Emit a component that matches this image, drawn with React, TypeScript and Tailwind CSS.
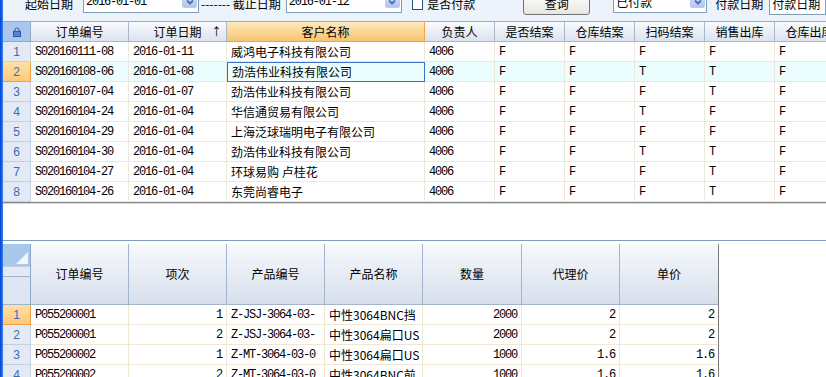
import React from 'react';

const mono = "font-['Liberation_Mono','Noto_Sans_CJK_SC',monospace] text-[12px] tracking-[-1.2px]";
const cjk = "font-['Noto_Sans_CJK_SC','Liberation_Sans',sans-serif] text-[12px]";

const topCols = [
  { title: '订单编号', w: 'w-[98px]' },
  { title: '订单日期', w: 'w-[98px]' },
  { title: '客户名称', w: 'w-[198px]' },
  { title: '负责人', w: 'w-[70px]' },
  { title: '是否结案', w: 'w-[70px]' },
  { title: '仓库结案', w: 'w-[70px]' },
  { title: '扫码结案', w: 'w-[70px]' },
  { title: '销售出库', w: 'w-[70px]' },
  { title: '仓库出库', w: 'w-[70px]' },
];

const orders = [
  ['S020160111-08', '2016-01-11', '威鸿电子科技有限公司', '4006', 'F', 'F', 'F', 'F', 'F'],
  ['S020160108-06', '2016-01-08', '劲浩伟业科技有限公司', '4006', 'F', 'F', 'T', 'T', 'F'],
  ['S020160107-04', '2016-01-07', '劲浩伟业科技有限公司', '4006', 'F', 'F', 'F', 'T', 'F'],
  ['S020160104-24', '2016-01-04', '华信通贸易有限公司', '4006', 'F', 'F', 'T', 'F', 'F'],
  ['S020160104-29', '2016-01-04', '上海泛球瑞明电子有限公司', '4006', 'F', 'F', 'F', 'F', 'F'],
  ['S020160104-30', '2016-01-04', '劲浩伟业科技有限公司', '4006', 'F', 'F', 'T', 'T', 'F'],
  ['S020160104-27', '2016-01-04', '环球易购 卢桂花', '4006', 'F', 'F', 'F', 'T', 'F'],
  ['S020160104-26', '2016-01-04', '东莞尚睿电子', '4006', 'F', 'F', 'F', 'T', 'F'],
];

const bottomCols = [
  { title: '订单编号', w: 'w-[98px]', right: false },
  { title: '项次', w: 'w-[98px]', right: true },
  { title: '产品编号', w: 'w-[98px]', right: false },
  { title: '产品名称', w: 'w-[98px]', right: false },
  { title: '数量', w: 'w-[99px]', right: true },
  { title: '代理价', w: 'w-[98px]', right: true },
  { title: '单价', w: 'w-[98px]', right: true },
];

const items = [
  ['P055200001', '1', 'Z-JSJ-3064-03-', '中性3064BNC挡', '2000', '2', '2'],
  ['P055200001', '2', 'Z-JSJ-3064-03-', '中性3064扁口US', '2000', '2', '2'],
  ['P055200002', '1', 'Z-MT-3064-03-0', '中性3064扁口US', '1000', '1.6', '1.6'],
  ['P055200002', '2', 'Z-MT-3064-03-0', '中性3064BNC前', '1000', '1.6', '1.6'],
];

const Chevron = () => (
  <div className="w-[15px] h-[13px] mt-[1px] mr-[1px] rounded-[2px] bg-gradient-to-b from-[#d3e0f8] to-[#afc6f0] border border-[#b9cdee] flex items-center justify-center">
    <svg width="8" height="6" viewBox="0 0 8 6">
      <path d="M1 1.5 L4 4.5 L7 1.5" stroke="#4a6aa8" strokeWidth="1.8" fill="none" />
    </svg>
  </div>
);

const Combo = ({ value, w }: { value: string; w: string }) => (
  <div className={`${w} h-[20px] bg-white border border-[#7f9db9] flex items-end justify-between`}>
    <span className={`${isCjk(value) ? cjk : mono} pl-[2px] pb-[3px] leading-[14px] text-black`}>{value}</span>
    <div className="self-start"><Chevron /></div>
  </div>
);

const Lock = () => (
  <svg width="8" height="10" viewBox="0 0 8 10">
    <path d="M2 4.5 V3 a2 2 0 0 1 4 0 V4.5" stroke="#3c64b0" strokeWidth="1.2" fill="none" />
    <rect x="0.5" y="4.5" width="7" height="5" fill="#5b84cf" stroke="#2f58a6" strokeWidth="1" />
  </svg>
);

const isCjk = (s: string) => /[\u4e00-\u9fff]/.test(s);

const App: React.FC = () => {
  return (
    <div className="w-[826px] h-[377px] overflow-hidden flex bg-white">
      <div className="w-[3px] shrink-0 bg-gradient-to-r from-[#0a3ccb] to-[#3384f6]" />
      <div className="flex-1 flex flex-col overflow-hidden">
        {/* toolbar */}
        <div className="h-[22px] shrink-0 bg-[#edf3fb] border-b border-[#a3a9b3] overflow-hidden">
          <div className={`flex items-start -mt-[7px] ${cjk} text-black whitespace-nowrap`}>
            <span className="ml-[22px] mt-[1px] leading-[20px]">起始日期</span>
            <div className="ml-[10px]"><Combo value="2016-01-01" w="w-[116px]" /></div>
            <span className="ml-[2px] mt-[1px] leading-[20px]">------- 截止日期</span>
            <div className="ml-[5px]"><Combo value="2016-01-12" w="w-[116px]" /></div>
            <div className="ml-[10px] mt-[5px] w-[12px] h-[12px] bg-white border border-[#1c5180]" />
            <span className="ml-[4px] mt-[1px] leading-[20px]">是否付款</span>
            <div className="ml-[48px] w-[71px] h-[22px] rounded-[3px] border border-[#6f7378] bg-gradient-to-b from-[#ffffff] to-[#e8e6df] flex items-end justify-center pb-[3px]">
              <span className="leading-[14px]">查询</span>
            </div>
            <div className="ml-[23px]"><Combo value="已付款" w="w-[94px]" /></div>
            <span className="ml-[8px] mt-[1px] leading-[20px]">付款日期</span>
            <div className="ml-[6px] w-[60px] h-[22px] bg-white border border-[#7f9db9] flex items-end">
              <span className="pl-[2px] pb-[3px] leading-[14px]">付款日期</span>
            </div>
          </div>
        </div>

        {/* top grid */}
        <div className="shrink-0 flex flex-col">
          <div className="flex h-[20px]">
            <div className="w-[28px] shrink-0 bg-[#a9c6ec] border-r border-b border-[#8fa9cc] flex items-center justify-center">
              <Lock />
            </div>
            {topCols.map((c, i) => (
              <div
                key={c.title}
                className={`${c.w} shrink-0 flex items-center justify-center ${cjk} text-black relative border-r border-b ${
                  i === 2
                    ? 'bg-gradient-to-b from-[#fde9bd] to-[#f6c56e] border-[#f0a43c]'
                    : 'bg-gradient-to-b from-[#f9fbfd] to-[#dbe3ee] border-[#a9b9cd]'
                }`}
              >
                {c.title}
                {i === 1 && <span className="absolute right-[4px] top-[1px] text-[11px]">↑</span>}
              </div>
            ))}
          </div>
          {orders.map((row, r) => (
            <div key={r} className={`flex h-[20px] ${r === 1 ? 'bg-[#ecfdfd]' : 'bg-white'}`}>
              <div
                className={`w-[28px] shrink-0 flex items-center justify-center font-['Liberation_Sans',sans-serif] text-[12px] text-[#3a6cb2] border-r border-b ${
                  r === 1
                    ? 'bg-gradient-to-b from-[#ffe0a6] to-[#fcc979] border-[#f0a040]'
                    : 'bg-[#e3eaf5] border-[#c3d0e2]'
                }`}
              >
                {r + 1}
              </div>
              {row.map((v, i) => (
                <div
                  key={i}
                  className={`${topCols[i].w} shrink-0 flex items-center pl-[4px] overflow-hidden whitespace-nowrap text-black ${
                    isCjk(v) ? cjk : mono
                  } ${
                    r === 1 && i === 2
                      ? 'border border-[#3d6ec6]'
                      : 'border-r border-b border-[#ebe8dc]'
                  }`}
                >
                  {v}
                </div>
              ))}
            </div>
          ))}
          <div className="h-[2px] bg-[#8b8b8b] border-b border-[#d8d6cc]" />
          <div className="h-[36px] bg-white" />
        </div>

        {/* bottom panel */}
        <div className="flex-1 border-t border-[#7e9cc0] pt-[3px] bg-white">
          <div className="flex">
            <div className="w-[28px] shrink-0 flex flex-col border-r border-[#8fa9cc]">
              <div className="h-[22px] bg-[#a9c6ec] flex items-end justify-end p-[2px]">
                <svg width="12" height="12" viewBox="0 0 12 12">
                  <path d="M12 0 L12 12 L0 12 Z" fill="#ffffff" opacity="0.85" />
                </svg>
              </div>
              <div className="h-[10px] bg-[#e3eaf5] border-t border-[#bfcde0]" />
              <div className="h-[29px] bg-[#dde6f2] border-t border-b border-[#9fb3cc]" />
            </div>
            <div className="flex border-r border-[#7a7a7a]">
              {bottomCols.map((c) => (
                <div
                  key={c.title}
                  className={`${c.w} h-[61px] shrink-0 flex items-center justify-center ${cjk} text-black bg-gradient-to-b from-[#f7f9fc] to-[#d6dfec] border-r border-b border-[#a2b5cd] last:border-r-0`}
                >
                  {c.title}
                </div>
              ))}
            </div>
          </div>
          {items.map((row, r) => (
            <div key={r} className="flex h-[20px]">
              <div
                className={`w-[28px] shrink-0 flex items-center justify-center font-['Liberation_Sans',sans-serif] text-[12px] text-[#3a6cb2] border-r border-b ${
                  r === 0
                    ? 'bg-gradient-to-b from-[#ffe0a6] to-[#fcc979] border-[#f0a040]'
                    : 'bg-[#e3eaf5] border-[#c3d0e2]'
                }`}
              >
                {r + 1}
              </div>
              <div className="flex border-r border-[#7a7a7a]">
                {row.map((v, i) => (
                  <div
                    key={i}
                    className={`${bottomCols[i].w} shrink-0 flex items-center overflow-hidden whitespace-nowrap text-black border-r border-b border-[#ede7d4] last:border-r-0 ${
                      bottomCols[i].right ? 'justify-end pr-[4px]' : 'pl-[4px]'
                    } ${isCjk(v) ? cjk : mono}`}
                  >
                    {v}
                  </div>
                ))}
              </div>
            </div>
          ))}
        </div>
      </div>
    </div>
  );
};

export default App;
